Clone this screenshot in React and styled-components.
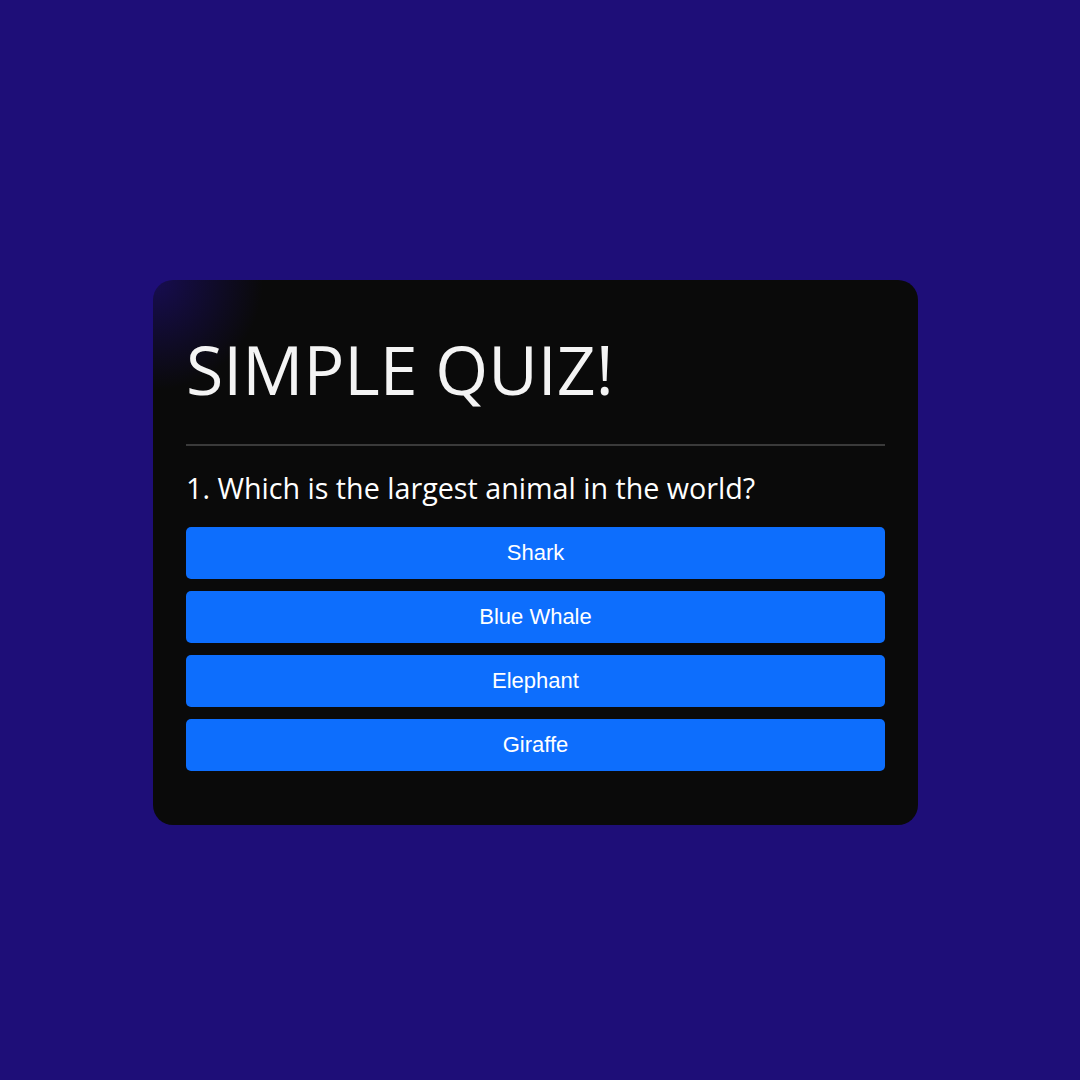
import React from "react"
import styled, { createGlobalStyle } from "styled-components"

const GlobalStyle = createGlobalStyle`
  * {
    box-sizing: border-box;
  }
  body {
    margin: 0;
    background: #1e0e78;
    font-family: "Open Sans", sans-serif;
  }
`
const Page = styled.div`
  width: 100vw;
  height: 100vh;
  display: flex;
  align-items: center;
  justify-content: center;
`
const Card = styled.div`
  width: 765px;
  height: 545px;
  margin: 25px 9px 0 0;
  background: radial-gradient(circle at 0 0, rgba(30, 14, 120, 0.65) 0, rgba(10, 10, 10, 0) 110px), #0a0a0a;
  border-radius: 20px;
  padding: 41px 33px 0;
  display: flex;
  flex-direction: column;
`
const Title = styled.h1`
  margin: 0;
  color: #f4f4f4;
  font-weight: 400;
  font-size: 68px;
  line-height: 1.4;
  padding-bottom: 28px;
  border-bottom: 2px solid #3a3a3a;
`
const Question = styled.h2`
  margin: 23px 0 20px;
  color: #ffffff;
  font-weight: 400;
  font-size: 28.7px;
  line-height: 1.3;
`
const Answers = styled.div`
  display: flex;
  flex-direction: column;
  gap: 12px;
`
const AnswerButton = styled.button`
  height: 52px;
  border: none;
  border-radius: 5px;
  background: #0d6efd;
  color: #ffffff;
  font-family: "Liberation Sans", Arial, sans-serif;
  font-size: 22px;
  cursor: pointer;
`

const answers = ["Shark", "Blue Whale", "Elephant", "Giraffe"]

const App = () => {
  return (
    <Page>
      <GlobalStyle />
      <Card>
        <Title>SIMPLE QUIZ!</Title>
        <Question>1. Which is the largest animal in the world?</Question>
        <Answers>
          {answers.map(a => (
            <AnswerButton key={a}>{a}</AnswerButton>
          ))}
        </Answers>
      </Card>
    </Page>
  )
}

export default App
